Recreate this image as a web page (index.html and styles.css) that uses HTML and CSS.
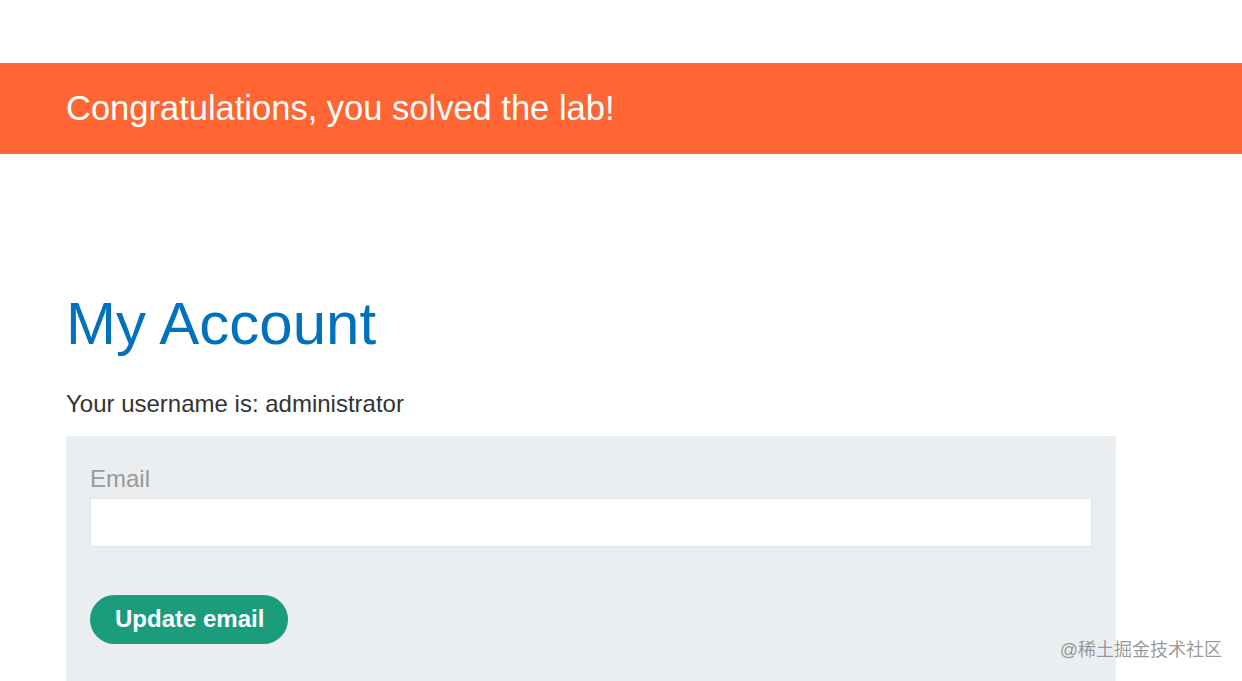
FILE: index.html
```html
<!DOCTYPE html>
<html lang="en">
  <head>
    <meta charset="UTF-8" />
    <meta name="viewport" content="width=device-width, initial-scale=1.0" />
    <title>My Account</title>
    <link rel="stylesheet" href="styles.css">
  </head>
  <body>
    <div id="notification-labsolved" class="notification-labsolved">
      <div class="container">
        <h4>Congratulations, you solved the lab!</h4>
      </div>
    </div>

    <div class="theme">
      <section class="maincontainer">
        <div class="container is-page">
          <h1>My Account</h1>
          <div id="account-content">
            <p>Your username is: administrator</p>
            <form class="login-form" id="change-email-form">
              <label for="email">Email</label>
              <input type="email" id="email" name="email" />
              <button class="button" type="submit">Update email</button>
            </form>
          </div>
        </div>
      </section>
    </div>

    <div class="watermark">@稀土掘金技术社区</div>
  </body>
</html>
```

FILE: styles.css
```css
:root {
  --orange: #ff6633;
  --blue: #0071bc;
  --green: #1a9c7d;
  --text: #333332;
  --panel: #ebeef1;
}

* {
  box-sizing: border-box;
  margin: 0;
  padding: 0;
}

body {
  font-family: "Liberation Sans", Arial, sans-serif;
  font-size: 24px;
  line-height: 1.2;
  color: var(--text);
  background: #fff;
  padding-top: 63px;
  overflow: hidden;
}

.container {
  width: 1050px;
  margin-left: 66px;
}

.notification-labsolved {
  background: var(--orange);
  height: 91px;
  display: flex;
  align-items: center;
}

.notification-labsolved h4 {
  color: #fff;
  font-size: 34.5px;
  font-weight: normal;
}

.maincontainer {
  padding-top: 134px;
}

h1 {
  color: var(--blue);
  font-size: 60px;
  font-weight: normal;
  margin-bottom: 30px;
}

#account-content p {
  margin-bottom: 17px;
}

.login-form {
  background: var(--panel);
  padding: 29px 24px 40px;
  display: flex;
  flex-direction: column;
  align-items: flex-start;
}

.login-form label {
  color: #999;
  margin-bottom: 4px;
}

.login-form input {
  width: 100%;
  height: 49px;
  border: 1px solid #e3e6e8;
  background: #fff;
  font-family: inherit;
  font-size: 24px;
  margin-bottom: 48px;
}

.button {
  background: var(--green);
  color: #fff;
  border: none;
  border-radius: 25px;
  height: 49px;
  padding: 0 24px 0 25px;
  font-family: inherit;
  font-size: 24px;
  font-weight: bold;
  cursor: pointer;
}

.watermark {
  position: absolute;
  right: 20px;
  top: 640px;
  font-family: "Liberation Sans", "Noto Sans CJK SC", sans-serif;
  font-size: 18px;
  color: rgba(120, 120, 120, 0.75);
}
```
